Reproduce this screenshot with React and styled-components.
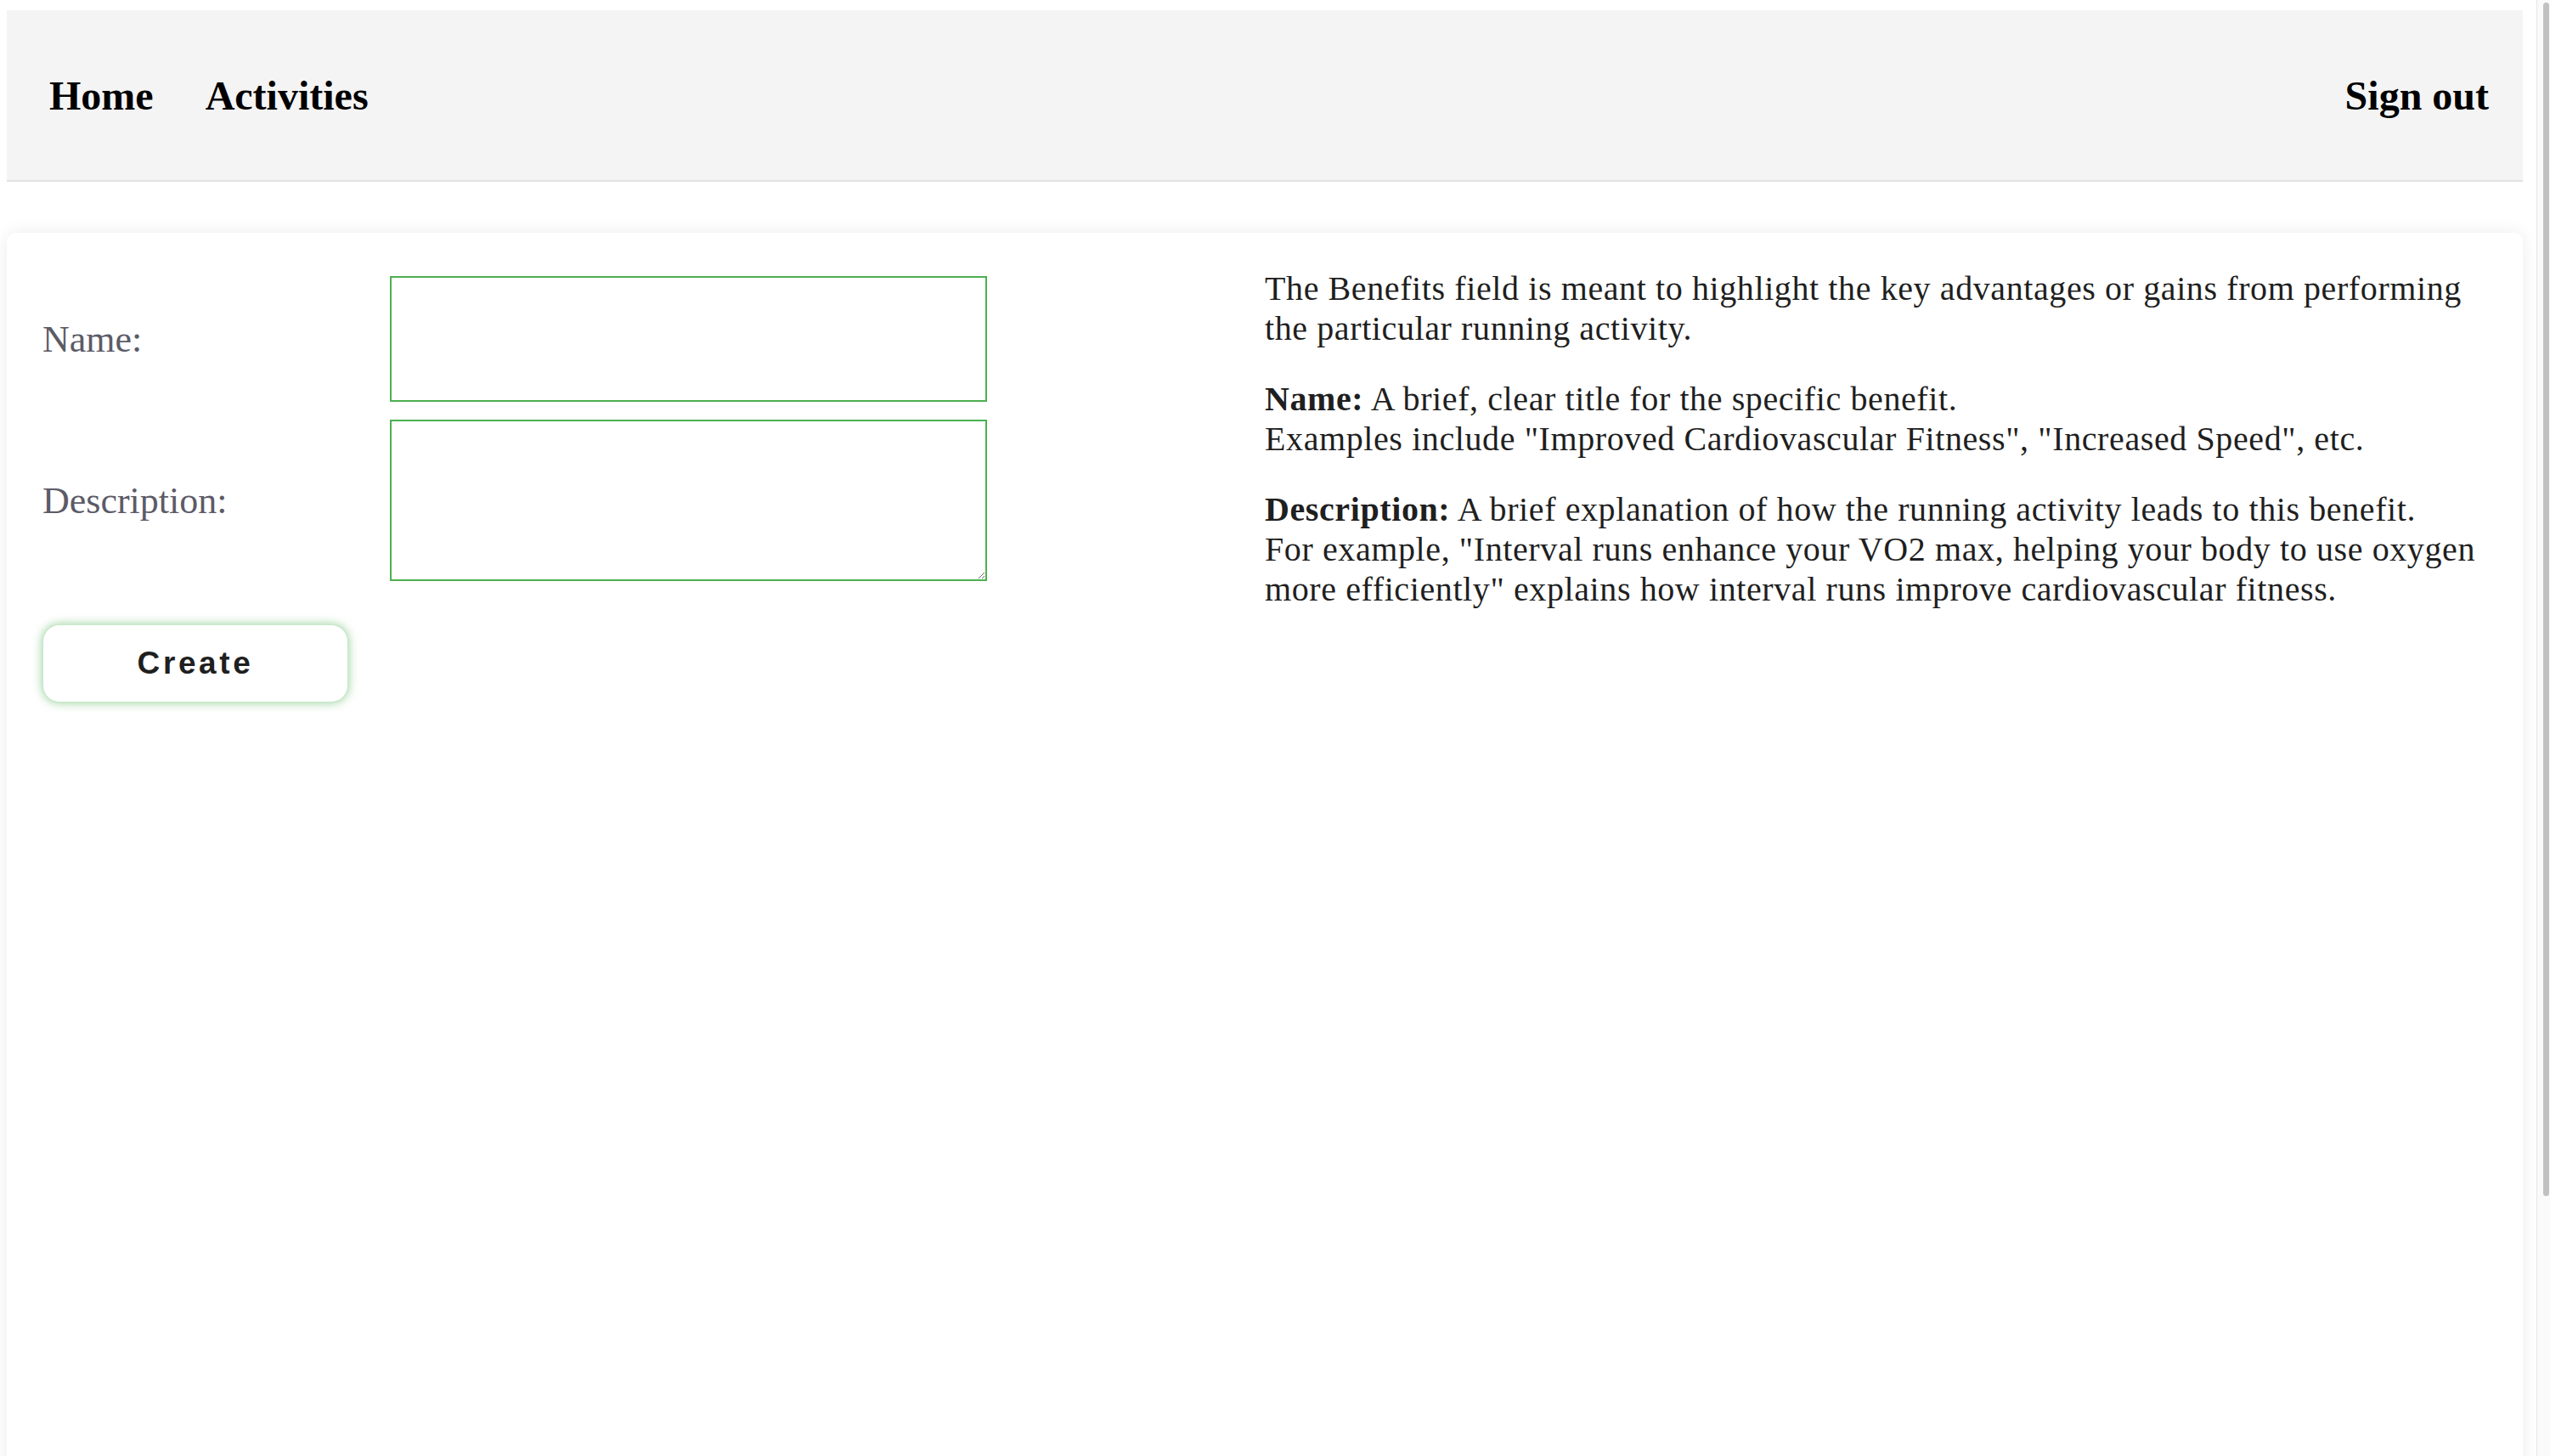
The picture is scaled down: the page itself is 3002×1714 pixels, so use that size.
import React from "react";
import styled, { createGlobalStyle } from "styled-components";

const GlobalStyle = createGlobalStyle`
  html, body {
    margin: 0;
    padding: 0;
    height: 100%;
    overflow: hidden;
    background: #ffffff;
  }
  #root { height: 100%; }
  * { box-sizing: border-box; }
`;

const Window = styled.div`
  height: 100vh;
  display: flex;
  overflow: hidden;
  background: #ffffff;
`;

const Page = styled.div`
  flex: 1;
  min-width: 0;
  padding: 12px 16px 8px 8px;
  display: flex;
  flex-direction: column;
  gap: 60px;
`;

const ScrollRail = styled.div`
  width: 16px;
  flex: none;
  background: #fafafa;
  border-left: 1px solid #e6e6e6;
  padding: 3px 1px 0 7px;
`;

const ScrollThumb = styled.div`
  height: 1405px;
  border-radius: 8px;
  background: #c1c1c1;
`;

const NavBar = styled.nav`
  height: 202px;
  flex: none;
  display: flex;
  align-items: center;
  gap: 61px;
  padding: 0 40px 0 50px;
  background: #f4f4f4;
  border-bottom: 2px solid #e2e2e2;
`;

const NavLink = styled.a`
  font-family: "Liberation Serif", "Times New Roman", serif;
  font-weight: 700;
  font-size: 48px;
  color: #000;
  text-decoration: none;
  cursor: pointer;
  margin-left: ${(p) => (p.$push ? "auto" : "0")};
`;

const Card = styled.main`
  flex: none;
  min-height: 1806px;
  background: #ffffff;
  border-radius: 10px;
  box-shadow: 0 0 20px rgba(0, 0, 0, 0.08);
  padding: 42px;
  display: grid;
  grid-template-columns: 1fr 1fr;
  align-items: start;
`;

const Form = styled.form`
  padding-top: 9px;
  display: grid;
  grid-template-columns: 409px 703px;
  row-gap: 21px;
  align-items: center;
`;

const Label = styled.label`
  font-family: "Liberation Serif", "Times New Roman", serif;
  font-size: 44px;
  color: #5c5b67;
`;

const TextInput = styled.input`
  width: 703px;
  height: 148px;
  border: 2px solid #4caf50;
  background: #fff;
  outline: none;
  font-size: 32px;
  padding: 8px;
`;

const TextArea = styled.textarea`
  width: 703px;
  height: 190px;
  border: 2px solid #4caf50;
  background: #fff;
  outline: none;
  font-size: 32px;
  padding: 8px;
  display: block;
  resize: both;
`;

const CreateButton = styled.button`
  grid-column: 1 / -1;
  justify-self: start;
  margin-top: 30px;
  width: 360px;
  height: 92px;
  background: #ffffff;
  border: 1px solid rgba(76, 175, 80, 0.3);
  border-radius: 20px;
  box-shadow: 0 0 12px rgba(76, 175, 80, 0.6);
  font-family: "Liberation Sans", Arial, sans-serif;
  font-weight: 700;
  font-size: 37px;
  letter-spacing: 3.6px;
  color: #1f1f1f;
  cursor: pointer;
`;

const Info = styled.section`
  font-family: "Liberation Serif", "Times New Roman", serif;
  font-size: 40px;
  line-height: 47px;
  letter-spacing: 0.6px;
  color: #1f1f1f;
`;

const Para = styled.p`
  margin: 0 0 36px;
`;

export default function App() {
  return (
    <>
      <GlobalStyle />
      <Window>
        <Page>
          <NavBar>
            <NavLink>Home</NavLink>
            <NavLink>Activities</NavLink>
            <NavLink $push>Sign out</NavLink>
          </NavBar>
          <Card>
            <Form onSubmit={(e) => e.preventDefault()}>
              <Label htmlFor="name">Name:</Label>
              <TextInput id="name" type="text" />
              <Label htmlFor="description">Description:</Label>
              <TextArea id="description" />
              <CreateButton type="submit">Create</CreateButton>
            </Form>
            <Info>
              <Para>
                The Benefits field is meant to highlight the key advantages or gains from performing the particular running activity.
              </Para>
              <Para>
                <strong>Name:</strong> A brief, clear title for the specific benefit.
                <br />
                Examples include "Improved Cardiovascular Fitness", "Increased Speed", etc.
              </Para>
              <Para>
                <strong>Description:</strong> A brief explanation of how the running activity leads to this benefit.
                <br />
                For example, "Interval runs enhance your VO2 max, helping your body to use oxygen more efficiently" explains how interval runs improve cardiovascular fitness.
              </Para>
            </Info>
          </Card>
        </Page>
        <ScrollRail>
          <ScrollThumb />
        </ScrollRail>
      </Window>
    </>
  );
}
